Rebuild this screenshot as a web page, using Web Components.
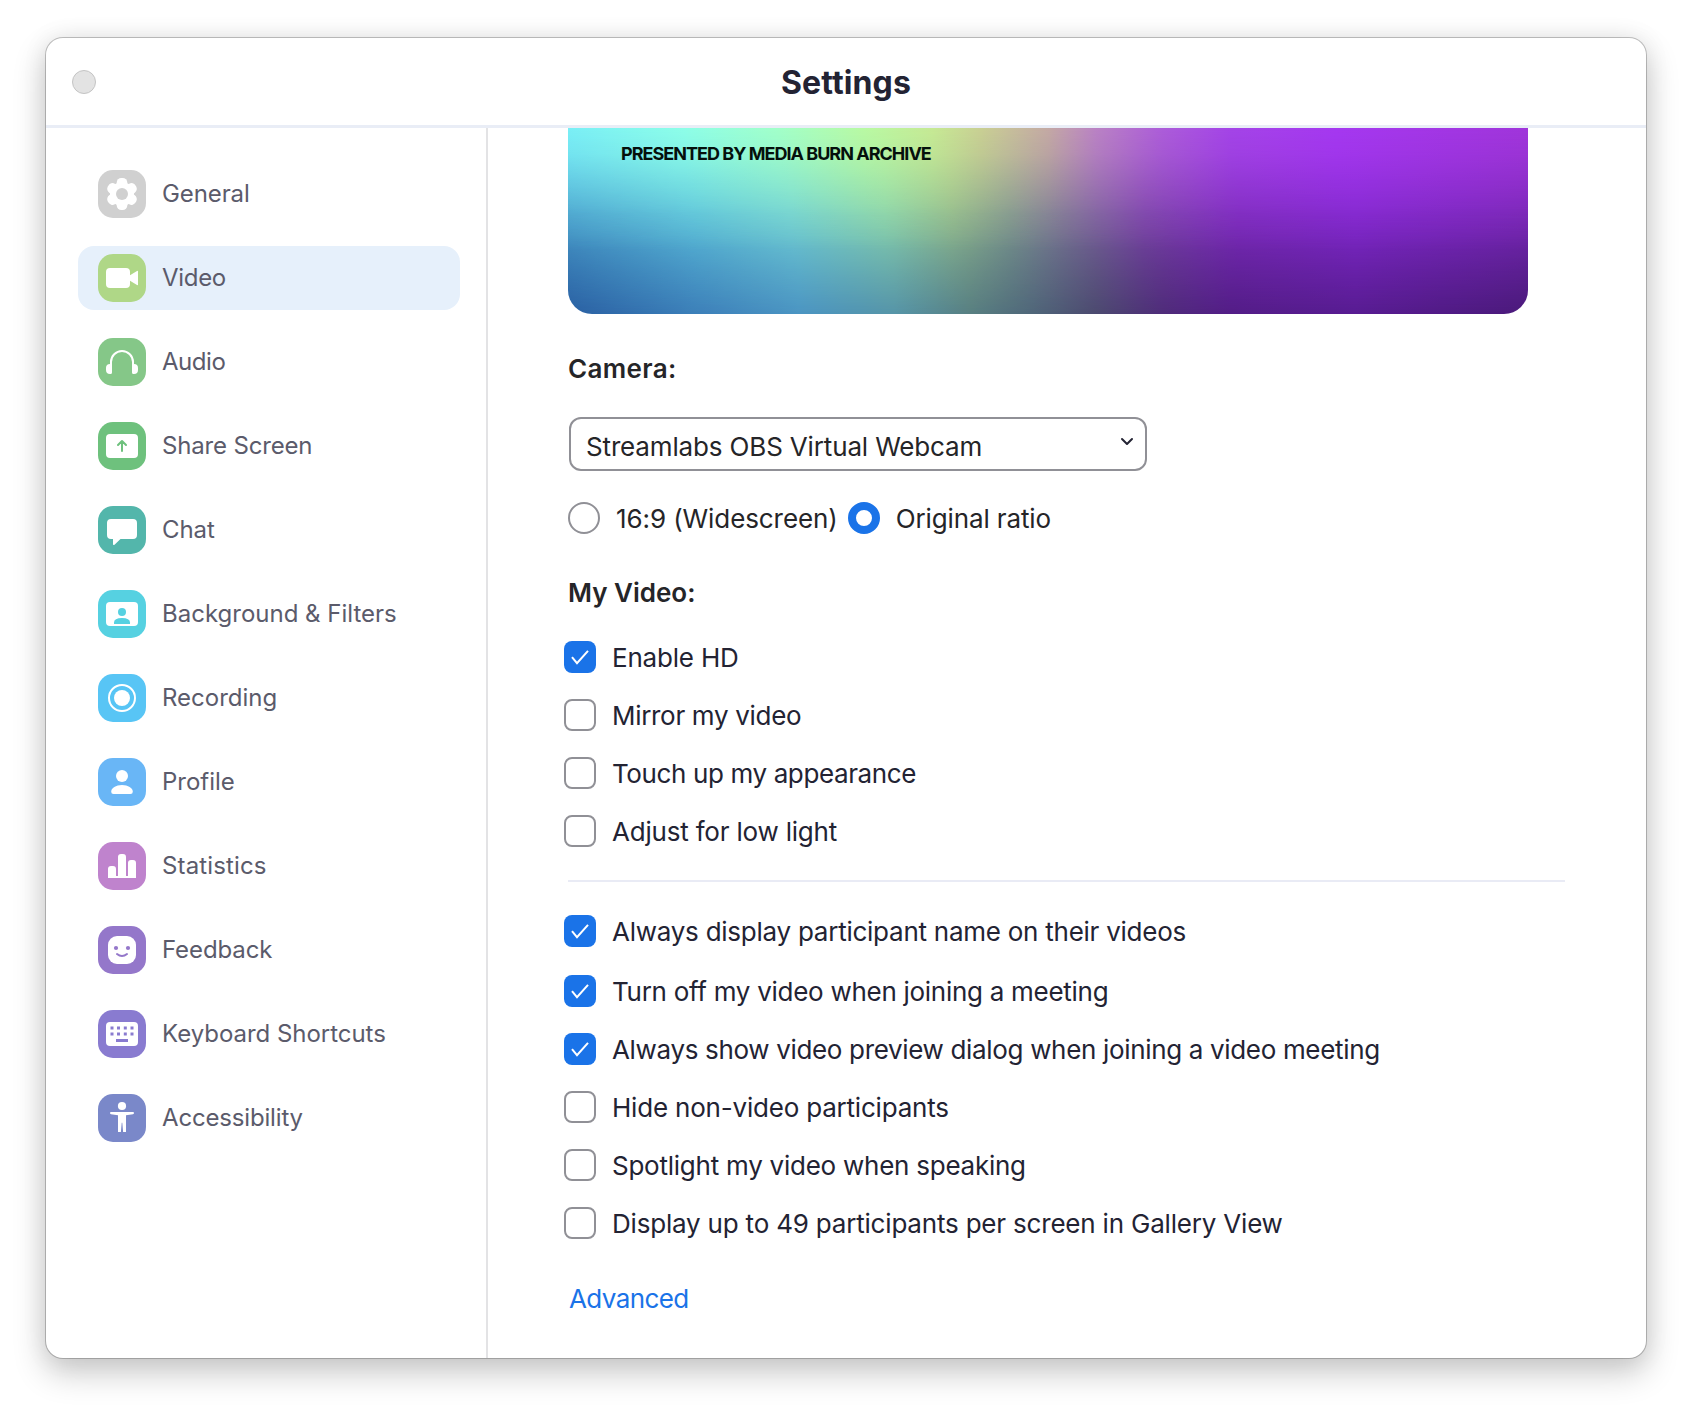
<!DOCTYPE html>
<html lang="en">
<head>
<meta charset="utf-8">
<title>Settings</title>
<style>
  html, body { margin: 0; height: 100%; background: #fff; }
  body { box-sizing: border-box; padding: 38px 46px 54px; overflow: hidden; font-family: Inter, "Liberation Sans", sans-serif; }
</style>
</head>
<body>
<settings-window heading="Settings">
  <settings-nav slot="nav">
    <nav-item icon="general" tint="#d0d0d0" track="-.1">General</nav-item>
    <nav-item icon="video" tint="#afd787" active track="-.3">Video</nav-item>
    <nav-item icon="audio" tint="#85c788" track="-.45">Audio</nav-item>
    <nav-item icon="share" tint="#6ec17d" track="-.17">Share Screen</nav-item>
    <nav-item icon="chat" tint="#53b6ab" track="-.066">Chat</nav-item>
    <nav-item icon="background" tint="#56d1e1">Background &amp; Filters</nav-item>
    <nav-item icon="recording" tint="#58c5f5">Recording</nav-item>
    <nav-item icon="profile" tint="#69b6f6">Profile</nav-item>
    <nav-item icon="statistics" tint="#bf83cd" track=".14">Statistics</nav-item>
    <nav-item icon="feedback" tint="#9477ca" track="-.102">Feedback</nav-item>
    <nav-item icon="keyboard" tint="#897bd0" track="-.03">Keyboard Shortcuts</nav-item>
    <nav-item icon="accessibility" tint="#7a88c9" track="-.17">Accessibility</nav-item>
  </settings-nav>

  <video-preview>PRESENTED BY MEDIA BURN ARCHIVE</video-preview>

  <section-title style="margin-top:39px" track=".35">Camera:</section-title>
  <select-box style="margin-top:32px" track="-.15">Streamlabs OBS Virtual Webcam</select-box>
  <radio-group style="margin-top:31px">
    <radio-option track="-.088">16:9 (Widescreen)</radio-option>
    <radio-option checked track="-.121">Original ratio</radio-option>
  </radio-group>

  <section-title style="margin-top:43px">My Video:</section-title>
  <check-option style="margin-top:32px" checked track="-.2">Enable HD</check-option>
  <check-option style="margin-top:26px" track="-.309">Mirror my video</check-option>
  <check-option style="margin-top:26px" track="-.378">Touch up my appearance</check-option>
  <check-option style="margin-top:26px" track="-.2">Adjust for low light</check-option>

  <line-divider style="margin-top:33px"></line-divider>

  <check-option style="margin-top:33px" checked track="-.25">Always display participant name on their videos</check-option>
  <check-option style="margin-top:28px" checked track="-.28">Turn off my video when joining a meeting</check-option>
  <check-option style="margin-top:26px" checked track="-.333">Always show video preview dialog when joining a video meeting</check-option>
  <check-option style="margin-top:26px" track="-.2">Hide non-video participants</check-option>
  <check-option style="margin-top:26px" track="-.245">Spotlight my video when speaking</check-option>
  <check-option style="margin-top:26px" track="-.195">Display up to 49 participants per screen in Gallery View</check-option>

  <text-link style="margin-top:44px" track="-.6">Advanced</text-link>
</settings-window>

<script>
const ICONS = {
  general: `<g fill="#fff"><circle cx="24" cy="24" r="12"/>
    ${[0, 60, 120].map(a => `<rect x="18.700" y="8" width="10.600" height="32" rx="4.600" transform="rotate(${a} 24 24)"/>`).join('')}</g>
    <circle cx="24" cy="24" r="6" fill="var(--tint)"/>`,
  video: `<rect x="8" y="14" width="24" height="20" rx="4" fill="#fff"/><path fill="#fff" d="M32 21.2l7-4.3q1-.5 1 .6v13q0 1.100-1 .6l-7-4.300z"/>`,
  audio: `<path fill="none" stroke="#fff" stroke-width="2" d="M13 29v-5a11 11 0 0 1 22 0v5"/><path fill="#fff" d="M12 26h2v8.500q0 1.500-1.500 1.500H12a4 4 0 0 1-4-4v-2a4 4 0 0 1 4-4zM36 26h-2v8.500q0 1.500 1.500 1.500h.5a4 4 0 0 0 4-4v-2a4 4 0 0 0-4-4z"/>`,
  share: `<rect x="8" y="12" width="32" height="24" rx="4" fill="#fff"/><path fill="none" stroke="var(--tint)" stroke-width="2" stroke-linecap="round" stroke-linejoin="round" d="M24 29V19M20 23l4-4 4 4"/>`,
  chat: `<path fill="#fff" d="M13 13h22a4 4 0 0 1 4 4v12a4 4 0 0 1-4 4H22.500l-6 5.700q-1.500 1-1.500-.7v-5h-2a4 4 0 0 1-4-4V17a4 4 0 0 1 4-4z"/>`,
  background: `<rect x="8" y="12" width="32" height="24" rx="4" fill="#fff"/><circle cx="24" cy="22" r="4" fill="var(--tint)"/><path fill="var(--tint)" d="M16 34v-1.500q0-4.500 8-4.500t8 4.500V34z"/>`,
  recording: `<circle cx="24" cy="24" r="13" fill="none" stroke="#fff" stroke-width="2"/><circle cx="24" cy="24" r="8" fill="#fff"/>`,
  profile: `<circle cx="24" cy="18" r="6" fill="#fff"/><path fill="#fff" d="M15.500 36q-2.300 0-2.300-2.300C13.200 30 18 27 24 27s10.800 3 10.800 6.700q0 2.300-2.300 2.300z"/>`,
  statistics: `<path fill="#fff" d="M10 36V27q0-3 3-3h2q3 0 3 3v7h2V15q0-3 3-3h2q3 0 3 3v19h2V21q0-3 3-3h2q3 0 3 3v15z"/>`,
  feedback: `<rect x="10" y="10" width="28" height="28" rx="9" fill="#fff"/><circle cx="18" cy="22" r="2.100" fill="var(--tint)"/><circle cx="30" cy="22" r="2.100" fill="var(--tint)"/><path fill="none" stroke="var(--tint)" stroke-width="2" stroke-linecap="round" d="M19 28q5 4 10 0"/>`,
  keyboard: `<rect x="8" y="12" width="32" height="24" rx="4" fill="#fff"/><g fill="var(--tint)">${[14, 20.500, 27.300, 34].map(x => [18, 24].map(y => `<rect x="${x - 1.500}" y="${y - 1.500}" width="3" height="3"/>`).join('')).join('')}<rect x="18" y="29" width="12" height="3"/></g>`,
  accessibility: `<circle cx="24" cy="12" r="4.100" fill="#fff"/><path fill="#fff" d="M13 18h22q1 0 1 1t-1 1.200L28 21.200V38h-2.900L24.300 29q-.3-1-.6 0L22.900 38H20V21.200l-7-1Q12 20 12 19t1-1z"/>`
};

/* Shared base: fills the shadow root and applies the tracking of the label. */
class Part extends HTMLElement {
  connectedCallback() {
    if (this.shadowRoot) return;
    if (this.hasAttribute('track')) this.style.letterSpacing = this.getAttribute('track') + 'px';
    this.attachShadow({ mode: 'open' }).innerHTML = this.render();
  }
}

customElements.define('settings-window', class extends Part {
  render() {
    return `<style>
      :host { display: flex; flex-direction: column; box-sizing: border-box; width: 100%; height: 100%; border-radius: 17px; background: #fff; overflow: hidden;
        box-shadow: 0 0 0 1px rgba(0,0,0,.22), 0 14px 32px 2px rgba(0,0,0,.2), 0 0 26px rgba(0,0,0,.08); }
      header { display: grid; grid-template-columns: 50px 1fr 50px; align-items: center; box-sizing: border-box; height: 90px; border-bottom: 3px solid #e9edf6; }
      .dot { box-sizing: border-box; width: 24px; height: 24px; margin: 1px 0 0 26px; border-radius: 50%; background: #e3e3e3; border: 1px solid #c4c4c4; }
      h1 { margin: 3px 0 0; text-align: center; font-size: 32px; line-height: 40px; font-weight: 700; letter-spacing: .1px; color: #232333; }
      .body { display: flex; flex: 1; min-height: 0; }
      main { display: flex; flex-direction: column; align-items: flex-start; flex: 1; padding: 0 80px; }
    </style>
    <header><span class="dot"></span><h1>${this.getAttribute('heading')}</h1></header>
    <div class="body"><slot name="nav"></slot><main><slot></slot></main></div>`;
  }
});

customElements.define('settings-nav', class extends Part {
  render() {
    return `<style>
      :host { display: flex; flex-direction: column; gap: 20px; box-sizing: border-box; width: 442px; padding: 34px 26px 0 32px; border-right: 2px solid #e3e3e5; }
    </style><slot></slot>`;
  }
});

customElements.define('nav-item', class extends Part {
  render() {
    return `<style>
      :host { --tint: ${this.getAttribute('tint')}; display: flex; align-items: center; gap: 16px; box-sizing: border-box; width: 382px; height: 64px; padding: 0 20px; border-radius: 16px; color: #5b5b6b; font-size: 24px; line-height: 30px; white-space: nowrap; }
      :host([active]) { background: #e6f0fb; }
      svg { flex: none; width: 48px; height: 48px; border-radius: 15px; background: var(--tint); }
      span { margin-top: -1px; }
    </style><svg viewBox="0 0 48 48">${ICONS[this.getAttribute('icon')]}</svg><span><slot></slot></span>`;
  }
});

customElements.define('video-preview', class extends Part {
  render() {
    return `<style>
      :host { display: grid; box-sizing: border-box; width: 960px; height: 186px; border-radius: 0 0 24px 24px; overflow: hidden; flex: none; }
      :host > *, div, p { grid-area: 1 / 1; }
      .base { background: linear-gradient(90deg, #2a60a3 0%, #3c7fb9 13%, #4b95c3 24%, #5695a8 34%, #587f81 42%, #50687a 48%, #4c4a70 55%, #4f2c7a 62%, #531d87 69%, #581c92 82%, #4a1a7a 100%); }
      .mid { --fade: linear-gradient(#000 25%, rgba(0,0,0,.92) 42%, rgba(0,0,0,.7) 58%, rgba(0,0,0,.36) 77%, transparent);
        background: linear-gradient(90deg, #4ba1cd 0%, #5dc2dc 13%, #73d3d6 23%, #8bd6ae 33%, #93bd8e 40%, #7f9a90 46%, #7d7499 52%, #7d46ab 60%, #7f2cc0 70%, #8429d1 82%, #7a28b9 100%);
        -webkit-mask: var(--fade); mask: var(--fade); }
      .top { --fade: linear-gradient(#000, rgba(0,0,0,.85) 14%, rgba(0,0,0,.52) 30%, rgba(0,0,0,.2) 46%, transparent 66%);
        background: linear-gradient(90deg, #7aeff6 0%, #8dfee8 12%, #a2ffc8 22%, #b9f9a2 31%, #c6e994 38%, #c9cf93 43%, #c4a9a4 50%, #ba82c4 55%, #ac5cd9 62%, #a444e7 69%, #a538f0 80%, #a035da 100%);
        -webkit-mask: var(--fade); mask: var(--fade); }
      p { z-index: 1; margin: 0; padding: 15px 0 0 53px; font-size: 18px; line-height: 22px; font-weight: 700; letter-spacing: -.98px; color: #05100c; white-space: nowrap; }
    </style><div class="base"></div><div class="mid"></div><div class="top"></div><p><slot></slot></p>`;
  }
});

customElements.define('section-title', class extends Part {
  render() {
    return `<style>:host { display: block; font-size: 26px; line-height: 32px; font-weight: 600; color: #252528; }</style><slot></slot>`;
  }
});

customElements.define('select-box', class extends Part {
  render() {
    return `<style>
      :host { display: flex; justify-content: space-between; box-sizing: border-box; width: 578px; height: 54px; margin-left: 1px; padding: 0 11px 0 15px; border: 2px solid #909096; border-radius: 12px; font-size: 26px; line-height: 32px; color: #252528; }
      span { margin-top: 12px; }
      svg { width: 14px; height: 10px; margin-top: 18px; }
    </style><span><slot></slot></span><svg viewBox="0 0 14 10"><path d="M2 2l5 5 5-5" fill="none" stroke="#232333" stroke-width="2" stroke-linecap="round" stroke-linejoin="round"/></svg>`;
  }
});

customElements.define('radio-group', class extends Part {
  render() { return `<style>:host { display: flex; gap: 10px; }</style><slot></slot>`; }
});

customElements.define('radio-option', class extends Part {
  render() {
    return `<style>
      :host { display: flex; align-items: center; gap: 16px; height: 32px; font-size: 26px; line-height: 32px; color: #252528; white-space: nowrap; }
      i { box-sizing: border-box; width: 32px; height: 32px; border: 2px solid #909096; border-radius: 50%; background: #fff; }
      :host([checked]) i { border: 8px solid #1a73e8; }
      span { margin-top: 2px; }
    </style><i></i><span><slot></slot></span>`;
  }
});

customElements.define('check-option', class extends Part {
  render() {
    const tick = this.hasAttribute('checked') ? '<svg viewBox="0 0 32 32"><path d="M8 16.200l5 6 11-12.400" fill="none" stroke="#fff" stroke-width="2"/></svg>' : '';
    return `<style>
      :host { display: flex; align-items: center; gap: 16px; height: 32px; margin-left: -4px; font-size: 26px; line-height: 32px; color: #232333; white-space: nowrap; }
      i { display: flex; box-sizing: border-box; width: 32px; height: 32px; border: 2px solid #909096; border-radius: 8px; }
      :host([checked]) i { border: 0; background: #1a73e8; }
      span { margin-top: 2px; }
    </style><i>${tick}</i><span><slot></slot></span>`;
  }
});

customElements.define('line-divider', class extends Part {
  render() { return `<style>:host { display: block; width: 997px; height: 2px; background: #e9ebf5; }</style>`; }
});

customElements.define('text-link', class extends Part {
  render() { return `<style>:host { display: block; padding-left: 1px; font-size: 26px; line-height: 32px; color: #1a73e8; }</style><slot></slot>`; }
});
</script>
</body>
</html>
